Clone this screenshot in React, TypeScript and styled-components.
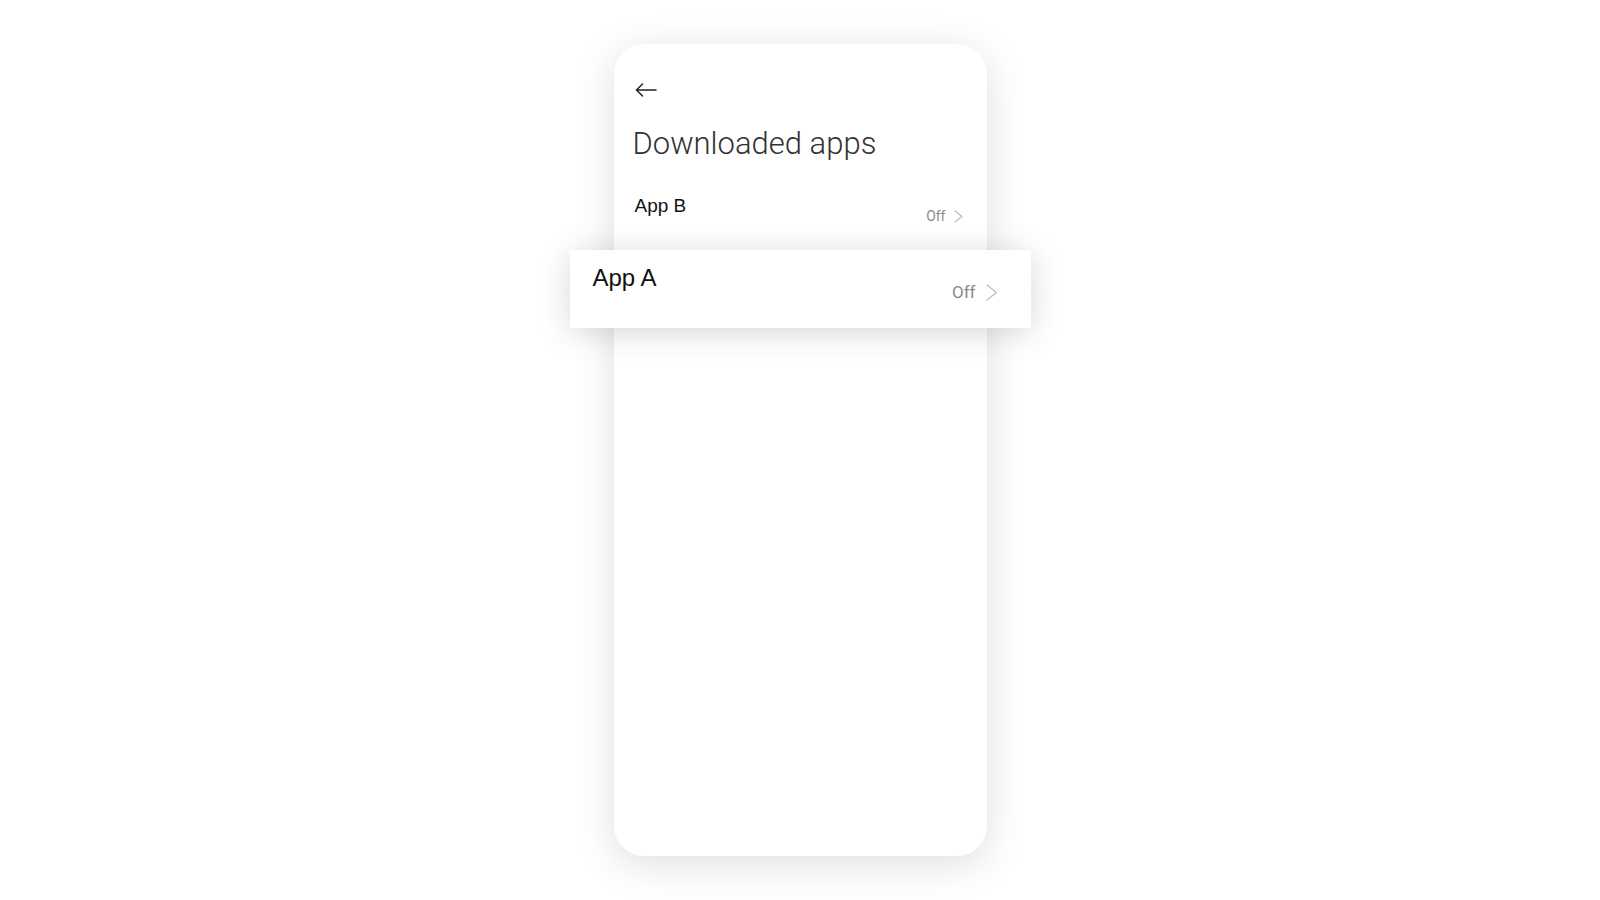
import React from 'react'
import styled, { createGlobalStyle } from 'styled-components'

const GlobalStyle = createGlobalStyle`
  html, body {
    margin: 0;
    padding: 0;
    background: #ffffff;
  }
  body {
    font-family: 'Liberation Sans', Arial, sans-serif;
  }
`

const Stage = styled.div`
  width: 1600px;
  height: 900px;
  display: flex;
  justify-content: center;
  padding-top: 44px;
  box-sizing: border-box;
`

const Phone = styled.div`
  position: relative;
  width: 373px;
  height: 812px;
  box-sizing: border-box;
  padding: 34px 24px 0 21px;
  background: #ffffff;
  border-radius: 30px;
  box-shadow: 0 8px 40px rgba(0, 0, 0, 0.13);
  display: flex;
  flex-direction: column;
`

const BackButton = styled.button`
  width: 24px;
  height: 24px;
  margin-left: -1px;
  padding: 0;
  border: 0;
  background: none;
  display: flex;
  align-items: center;
  justify-content: center;
  color: #222;
`

const Title = styled.h1`
  margin: 22px 0 0 -2px;
  font-family: Roboto, 'Noto Sans', sans-serif;
  font-weight: 300;
  font-size: 31px;
  line-height: 40px;
  color: #333;
`

const Row = styled.div<{ $lifted?: boolean }>`
  display: flex;
  justify-content: space-between;
  align-items: flex-start;
  background: #ffffff;
  ${p => p.$lifted
    ? `
    position: absolute;
    left: -44px;
    top: 206px;
    width: 461px;
    height: 78px;
    box-sizing: border-box;
    padding: 13px 33px 0 23px;
    box-shadow: 0 4px 32px rgba(0, 0, 0, 0.16);
    z-index: 2;
  `
    : `
    margin-top: 30px;
    height: 56px;
  `}
`

const AppName = styled.span<{ $lifted?: boolean }>`
  font-family: 'Liberation Sans', Arial, sans-serif;
  color: #111;
  font-size: ${p => (p.$lifted ? '24px' : '19px')};
  line-height: ${p => (p.$lifted ? '30px' : '24px')};
`

const Status = styled.div<{ $lifted?: boolean }>`
  display: flex;
  align-items: center;
  gap: ${p => (p.$lifted ? '10px' : '8px')};
  margin-top: ${p => (p.$lifted ? '19px' : '14px')};
  font-family: Roboto, 'Noto Sans', sans-serif;
  font-size: ${p => (p.$lifted ? '17px' : '14px')};
  line-height: ${p => (p.$lifted ? '20px' : '16px')};
  color: #8a8a8a;
`

const Chevron: React.FC<{ big?: boolean }> = ({ big }) =>
  big ? (
    <svg width="12" height="17" viewBox="0 0 12 17" fill="none">
      <path d="M1 1 L10.5 8.5 L1 16" stroke="#bdbdbd" strokeWidth="1.2" strokeLinecap="round" strokeLinejoin="round" />
    </svg>
  ) : (
    <svg width="9" height="13" viewBox="0 0 9 13" fill="none">
      <path d="M1 1 L8 6.5 L1 12" stroke="#bdbdbd" strokeWidth="1.2" strokeLinecap="round" strokeLinejoin="round" />
    </svg>
  )

const apps = [
  { name: 'App B', status: 'Off' },
]

export default function App() {
  return (
    <>
      <GlobalStyle />
      <Stage>
        <Phone>
          <BackButton aria-label="Back">
            <svg width="22" height="14" viewBox="0 0 22 14" fill="none">
              <path d="M21 7 H1.5 M7.5 1 L1.5 7 L7.5 13" stroke="#222" strokeWidth="1.5" strokeLinecap="round" strokeLinejoin="round" />
            </svg>
          </BackButton>
          <Title>Downloaded apps</Title>
          {apps.map(a => (
            <Row key={a.name}>
              <AppName>{a.name}</AppName>
              <Status>
                {a.status}
                <Chevron />
              </Status>
            </Row>
          ))}
          <Row $lifted>
            <AppName $lifted>App A</AppName>
            <Status $lifted>
              Off
              <Chevron big />
            </Status>
          </Row>
        </Phone>
      </Stage>
    </>
  )
}
